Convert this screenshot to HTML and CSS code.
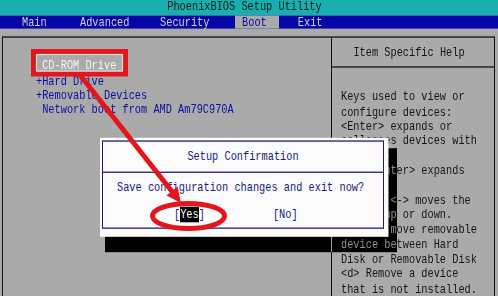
FILE: index.html
```html
<!DOCTYPE html>
<html lang="en">
<head>
  <meta charset="UTF-8">
  <title>PhoenixBIOS Setup Utility - Boot</title>
  <link rel="stylesheet" href="styles.css">
</head>
<body>
<div class="page">
  <div class="screen">
    <div class="title">PhoenixBIOS Setup Utility</div>
    <div class="menu">
      <span class="tab tab-main">Main</span>
      <span class="tab tab-adv">Advanced</span>
      <span class="tab tab-sec">Security</span>
      <span class="tab tab-boot">Boot</span>
      <span class="tab">Exit</span>
    </div>

    <div class="frame">
      <div class="boot-list">
        <div class="item selected"> CD-ROM Drive</div>
        <div class="item">+Hard Drive</div>
        <div class="item">+Removable Devices</div>
        <div class="item"> Network boot from AMD Am79C970A</div>
      </div>
      <div class="help">
        <div class="help-head">Item Specific Help</div>
        <div class="help-body">Keys used to view or
configure devices:
&lt;Enter&gt; expands or
collapses devices with
a + or -
&lt;Ctrl+Enter&gt; expands
all
&lt;+&gt; and &lt;-&gt; moves the
device up or down.
&lt;n&gt; May move removable
device between Hard
Disk or Removable Disk
&lt;d&gt; Remove a device
that is not installed.</div>
      </div>
    </div>

    <!-- dialog shadow, blended so the text under it shows inverted -->
    <div class="shadow"></div>
    <div class="dialog">
      <div class="dialog-box">
        <div class="dialog-title">Setup Confirmation</div>
        <div class="dialog-msg">Save configuration changes and exit now?</div>
        <div class="dialog-btns">
          <span class="btn">[<span class="hl">Yes</span>]</span>
          <span class="btn btn-no">[No]</span>
        </div>
      </div>
    </div>
  </div>

  <svg class="marks" width="498" height="296" viewBox="0 0 498 296">
    <rect x="33.5" y="51.5" width="92" height="22.5" fill="none" stroke="#e3161d" stroke-width="5"/>
    <rect x="36.5" y="54.5" width="86" height="16.5" fill="none" stroke="#e2e2e2" stroke-width="1.2"/>
    <line x1="80" y1="75" x2="174" y2="194" stroke="#e3161d" stroke-width="5"/>
    <polygon points="181,203 166.5,195.5 177.5,186.5" fill="#e3161d"/>
    <ellipse cx="188.5" cy="216" rx="36" ry="12.5" fill="none" stroke="#e3161d" stroke-width="5"/>
  </svg>
</div>
</body>
</html>
```

FILE: styles.css
```css
body {
  margin: 0;
  background-color: #aaa;
  overflow: hidden;
}
.page {
  position: relative;
  width: 498px;
  height: 296px;
  overflow: hidden;
}

/* the BIOS font is tall and narrow, so the whole screen is stretched */
.screen {
  position: relative;
  width: 498px;
  height: 228px;
  overflow: hidden;
  transform: scaleY(1.3);
  transform-origin: 0 0;
  background-color: #aaa;
  font-family: "Liberation Mono", "DejaVu Sans Mono", monospace;
  font-size: 10.3px;
  color: #141414;
}

.title {
  height: 11.54px;
  line-height: 11.54px;
  padding-right: 9px;
  text-align: center;
  background-color: #1aafaf;
  color: #101818;
}
.menu {
  display: flex;
  height: 10.77px;
  line-height: 10.77px;
  padding-left: 22px;
  background-color: #0606a6;
  color: #d2d2d2;
}
.tab-main { margin-right: 33.3px; }
.tab-adv { margin-right: 30.6px; }
.tab-sec { margin-right: 25.6px; }
.tab-boot {
  margin-right: 19px;
  padding: 0 12px 0 7px;
  background-color: #aaa;
  color: #0606a6;
}

.frame {
  display: grid;
  grid-template-columns: 329px 1fr;
  width: 493px;
  height: 240px;
  box-sizing: border-box;
  margin: 5.38px 0 0 2px;
  border: 1px solid #111;
}
.boot-list {
  border-right: 1px solid #111;
  padding: 16.6px 0 0 33px;
  line-height: 11.35px;
  color: #0c0ca0;
}
.item {
  white-space: pre;
}
.item.selected {
  color: #f6f6f6;
}
.help-head {
  height: 22.3px;
  line-height: 22.3px;
  padding-right: 8px;
  text-align: center;
  border-bottom: 1px solid #111;
}
.help-body {
  padding: 17.4px 0 0 9px;
  line-height: 11.35px;
  white-space: pre;
}

.shadow {
  position: absolute;
  left: 105px;
  top: 113.8px;
  width: 292px;
  height: 80px;
  background-color: #aaa;
  mix-blend-mode: difference;
}
.dialog {
  position: absolute;
  left: 100px;
  top: 106.15px;
  width: 288px;
  height: 75.4px;
  box-sizing: border-box;
  padding: 2.3px 4px 5.4px 2px;
  background-color: #fbfbfb;
  color: #1a1a7e;
}
.dialog-box {
  height: 100%;
  box-sizing: border-box;
  border: 1px solid #1c1c80;
}
.dialog-title {
  height: 22.3px;
  line-height: 22.3px;
  text-align: center;
  border-bottom: 1px solid #1c1c80;
}
.dialog-msg {
  padding: 5.8px 0 0 14px;
  line-height: 11.35px;
}
.dialog-btns {
  display: flex;
  margin-top: 10.2px;
  padding-left: 71px;
  line-height: 11.35px;
}
.btn-no {
  margin-left: 68px;
}
.hl {
  background-color: #000;
  color: #fff;
}

.marks {
  position: absolute;
  left: 0;
  top: 0;
}
```
